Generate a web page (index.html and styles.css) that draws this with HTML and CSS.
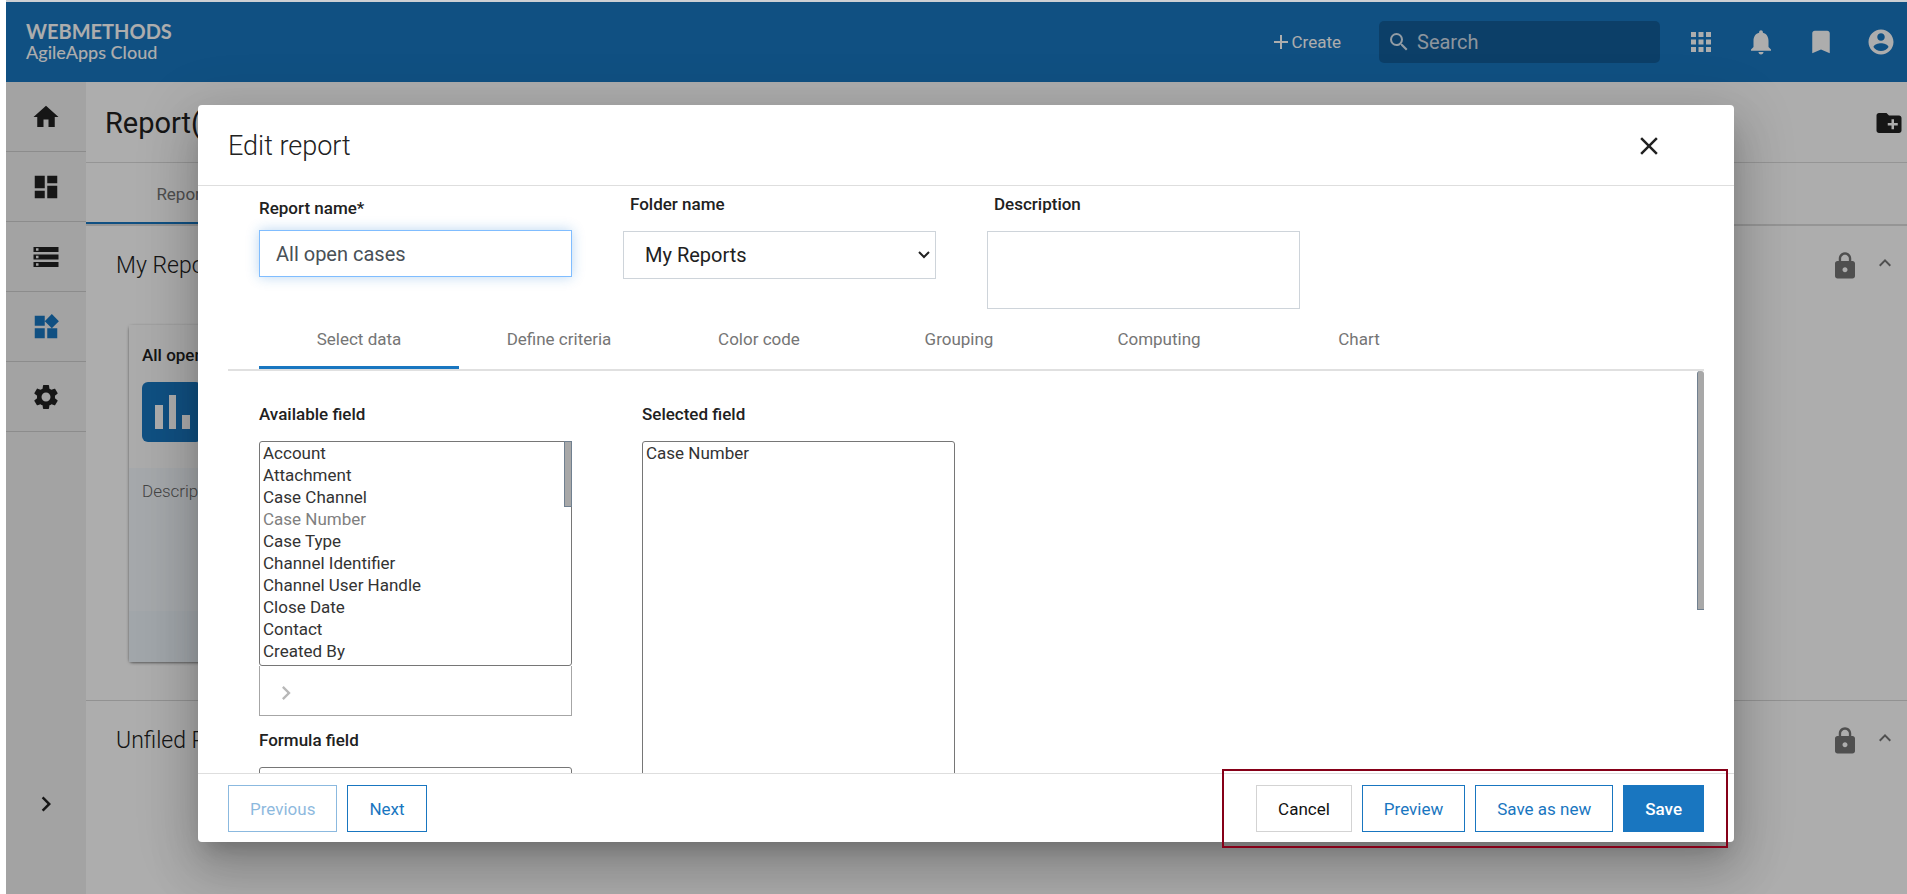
FILE: index.html
```html
<!DOCTYPE html>
<html lang="en">
<head>
<meta charset="utf-8">
<title>AgileApps Cloud - Edit report</title>
<link rel="stylesheet" href="styles.css">
</head>
<body>
<div class="app">
  <header class="topbar">
    <a class="logo" href="#"><span class="logo-name">WEBMETHODS</span><span class="logo-sub">AgileApps Cloud</span></a>
    <div class="topbar-actions">
      <button class="create" type="button">
        <svg width="14" height="14" viewBox="0 0 14 14"><path d="M6 0h2v6h6v2H8v6H6V8H0V6h6z"/></svg>Create
      </button>
      <div class="search">
        <svg class="search-icon" viewBox="0 0 24 24"><path d="M15.5 14h-.79l-.28-.27A6.47 6.47 0 0 0 16 9.5 6.5 6.5 0 1 0 9.5 16c1.61 0 3.09-.59 4.23-1.57l.27.28v.79l5 4.99L20.49 19l-4.99-5zm-6 0C7.01 14 5 11.99 5 9.5S7.01 5 9.5 5 14 7.01 14 9.5 11.99 14 9.5 14z"/></svg>
        <input class="search-input" type="text" placeholder="Search" aria-label="Search">
      </div>
      <button class="icon-btn" type="button" aria-label="Apps"><svg class="icon" viewBox="0 0 24 24"><path d="M4 8h4V4H4v4zm6 12h4v-4h-4v4zm-6 0h4v-4H4v4zm0-6h4v-4H4v4zm6 0h4v-4h-4v4zm6-10v4h4V4h-4zm-6 4h4V4h-4v4zm6 6h4v-4h-4v4zm0 6h4v-4h-4v4z"/></svg></button>
      <button class="icon-btn" type="button" aria-label="Notifications"><svg class="icon" viewBox="0 0 24 24"><path d="M12 22c1.1 0 2-.9 2-2h-4c0 1.1.89 2 2 2zm6-6v-5c0-3.07-1.64-5.64-4.5-6.32V4c0-.83-.67-1.5-1.5-1.5s-1.5.67-1.5 1.5v.68C7.63 5.36 6 7.92 6 11v5l-2 2v1h16v-1l-2-2z"/></svg></button>
      <button class="icon-btn" type="button" aria-label="Bookmarks"><svg class="icon" viewBox="0 0 24 24"><path d="M17 3H7c-1.1 0-1.99.9-1.99 2L5 21l7-3 7 3V5c0-1.1-.9-2-2-2z"/></svg></button>
      <button class="icon-btn" type="button" aria-label="Account"><svg class="icon" viewBox="0 0 24 24"><path d="M12 2C6.48 2 2 6.48 2 12s4.48 10 10 10 10-4.48 10-10S17.52 2 12 2zm0 3c1.66 0 3 1.34 3 3s-1.34 3-3 3-3-1.34-3-3 1.34-3 3-3zm0 14.2c-2.5 0-4.71-1.28-6-3.22.03-1.99 4-3.08 6-3.08 1.99 0 5.97 1.09 6 3.08-1.29 1.94-3.5 3.22-6 3.22z"/></svg></button>
    </div>
  </header>

  <div class="workspace">
    <nav class="sidebar" aria-label="Main">
      <a class="nav-item" href="#" aria-label="Home"><svg class="icon" viewBox="0 0 24 24"><path d="M10 20v-6h4v6h5v-8h3L12 3 2 12h3v8z"/></svg></a>
      <a class="nav-item" href="#" aria-label="Dashboard"><svg class="icon" viewBox="0 0 24 24"><path d="M3 13h8V3H3v10zm0 8h8v-6H3v6zm10 0h8V11h-8v10zm0-18v6h8V3h-8z"/></svg></a>
      <a class="nav-item" href="#" aria-label="Records"><svg class="icon" viewBox="0 0 24 24"><path d="M2 20h20v-4H2v4zm2-3h2v2H4v-2zM2 4v4h20V4H2zm4 3H4V5h2v2zm-4 7h20v-4H2v4zm2-3h2v2H4v-2z"/></svg></a>
      <a class="nav-item nav-item-active" href="#" aria-label="Reports"><svg class="icon" viewBox="0 0 24 24"><path d="M13 13v8h8v-8h-8zM3 21h8v-8H3v8zM3 3v8h8V3H3zm13.660-1.310L11 7.340 16.660 13l5.660-5.660-5.660-5.650z"/></svg></a>
      <a class="nav-item" href="#" aria-label="Settings"><svg class="icon" viewBox="0 0 24 24"><path d="M19.140 12.940c.04-.3.060-.610.060-.940 0-.320-.020-.640-.070-.940l2.030-1.580c.180-.140.230-.410.120-.610l-1.920-3.320c-.120-.220-.370-.290-.590-.220l-2.390.960c-.5-.380-1.030-.7-1.620-.940l-.360-2.540c-.040-.240-.240-.410-.480-.410h-3.840c-.240 0-.430.170-.470.410l-.360 2.540c-.590.240-1.130.570-1.620.940l-2.390-.960c-.220-.080-.470 0-.590.220L2.740 8.870c-.120.210-.080.470.120.610l2.030 1.580c-.05.3-.09.630-.09.940s.020.640.070.940l-2.030 1.580c-.180.140-.230.410-.120.610l1.920 3.320c.120.220.370.290.590.220l2.390-.960c.5.380 1.030.7 1.620.940l.360 2.540c.05.240.240.410.480.410h3.840c.240 0 .440-.170.470-.410l.360-2.540c.590-.240 1.130-.560 1.620-.940l2.390.960c.220.080.470 0 .590-.220l1.920-3.320c.120-.220.070-.470-.120-.610l-2.010-1.580zM12 15.600c-1.980 0-3.600-1.620-3.600-3.600s1.620-3.600 3.600-3.600 3.600 1.620 3.600 3.600-1.620 3.600-3.600 3.600z"/></svg></a>
      <button class="nav-expand" type="button" aria-label="Expand menu"><svg class="icon" viewBox="0 0 24 24"><path d="M10 6L8.590 7.410 13.170 12l-4.580 4.590L10 18l6-6z"/></svg></button>
    </nav>

    <main class="content">
      <div class="page-head">
        <h1 class="page-title">Report(s)</h1>
        <button class="icon-btn icon-dark" type="button" aria-label="New folder"><svg class="icon" viewBox="0 0 24 24"><path d="M20 6h-8l-2-2H4c-1.110 0-1.990.890-1.990 2L2 18c0 1.110.890 2 2 2h16c1.110 0 2-.890 2-2V8c0-1.110-.890-2-2-2zm-1 8h-3v3h-2v-3h-3v-2h3V9h2v3h3v2z"/></svg></button>
      </div>
      <div class="page-tabs"><a class="page-tab" href="#">Reports</a></div>

      <section class="folder">
        <div class="folder-head">
          <h2 class="folder-title">My Reports</h2>
          <div class="folder-tools">
            <svg class="icon" viewBox="0 0 24 24"><path d="M18 8h-1V6c0-2.760-2.240-5-5-5S7 3.240 7 6v2H6c-1.100 0-2 .9-2 2v10c0 1.100.9 2 2 2h12c1.100 0 2-.9 2-2V10c0-1.100-.9-2-2-2zm-6 9c-1.100 0-2-.9-2-2s.9-2 2-2 2 .9 2 2-.9 2-2 2zm3.100-9H8.900V6c0-1.710 1.390-3.100 3.100-3.100s3.100 1.390 3.100 3.100v2z"/></svg>
            <svg class="icon-small" viewBox="0 0 24 24"><path d="M12 8l-6 6 1.410 1.410L12 10.830l4.590 4.580L18 14z"/></svg>
          </div>
        </div>
        <article class="card">
          <div class="card-top">
            <h3 class="card-title">All open cases</h3>
            <svg class="card-icon" viewBox="0 0 60 60"><rect class="card-icon-bg" width="60" height="60" rx="6"/><path class="card-icon-bars" d="M13 23h8v24h-8zM27 13h7v34h-7zM40 33h8v14h-8z"/></svg>
          </div>
          <p class="card-desc">Description</p>
          <div class="card-foot"></div>
        </article>
      </section>

      <section class="folder">
        <div class="folder-head">
          <h2 class="folder-title">Unfiled Reports</h2>
          <div class="folder-tools">
            <svg class="icon" viewBox="0 0 24 24"><path d="M18 8h-1V6c0-2.760-2.240-5-5-5S7 3.240 7 6v2H6c-1.100 0-2 .9-2 2v10c0 1.100.9 2 2 2h12c1.100 0 2-.9 2-2V10c0-1.100-.9-2-2-2zm-6 9c-1.100 0-2-.9-2-2s.9-2 2-2 2 .9 2 2-.9 2-2 2zm3.100-9H8.900V6c0-1.710 1.390-3.100 3.100-3.100s3.100 1.390 3.100 3.100v2z"/></svg>
            <svg class="icon-small" viewBox="0 0 24 24"><path d="M12 8l-6 6 1.410 1.410L12 10.830l4.590 4.580L18 14z"/></svg>
          </div>
        </div>
      </section>
    </main>
  </div>

  <div class="backdrop">
    <div class="dialog" role="dialog" aria-labelledby="dialog-title">
      <div class="dialog-head">
        <h2 class="dialog-title" id="dialog-title">Edit report</h2>
        <button class="icon-btn icon-dark" type="button" aria-label="Close"><svg class="icon" viewBox="0 0 24 24"><path d="M19 6.410L17.590 5 12 10.590 6.410 5 5 6.410 10.590 12 5 17.590 6.410 19 12 13.410 17.590 19 19 17.590 13.410 12z"/></svg></button>
      </div>

      <form class="dialog-form">
        <div class="field field-required">
          <label class="label" for="name">Report name*</label>
          <input class="control control-focus" id="name" type="text" value="All open cases">
        </div>
        <div class="field">
          <label class="label" for="folder">Folder name</label>
          <div class="select-wrap">
            <select class="control control-select" id="folder"><option>My Reports</option></select>
            <svg class="select-arrow" viewBox="0 0 12 8"><path d="M1 1l5 5 5-5"/></svg>
          </div>
        </div>
        <div class="field">
          <label class="label" for="desc">Description</label>
          <textarea class="control control-area" id="desc"></textarea>
        </div>
      </form>

      <div class="steps">
        <button class="step step-active" type="button">Select data</button>
        <button class="step" type="button">Define criteria</button>
        <button class="step" type="button">Color code</button>
        <button class="step" type="button">Grouping</button>
        <button class="step" type="button">Computing</button>
        <button class="step" type="button">Chart</button>
      </div>

      <div class="panel-wrap">
        <div class="panel">
          <div class="panel-col">
            <label class="label" for="available">Available field</label>
            <div class="list-wrap">
              <select class="list" id="available" multiple size="10">
                <option>Account</option>
                <option>Attachment</option>
                <option>Case Channel</option>
                <option disabled>Case Number</option>
                <option>Case Type</option>
                <option>Channel Identifier</option>
                <option>Channel User Handle</option>
                <option>Close Date</option>
                <option>Contact</option>
                <option>Created By</option>
              </select>
              <span class="thumb thumb-list"></span>
            </div>
            <div class="move-box">
              <button class="move" type="button" aria-label="Add field"><svg class="icon-small" viewBox="0 0 24 24"><path d="M10 6L8.590 7.410 13.170 12l-4.580 4.590L10 18l6-6z"/></svg></button>
            </div>
            <label class="label" for="formula">Formula field</label>
            <select class="list" id="formula" multiple size="10"></select>
          </div>
          <div class="panel-col">
            <label class="label" for="selected">Selected field</label>
            <select class="list list-tall" id="selected" multiple size="24">
              <option>Case Number</option>
            </select>
          </div>
        </div>
        <span class="thumb thumb-panel"></span>
      </div>

      <div class="dialog-foot">
        <button class="btn btn-outline" type="button" disabled>Previous</button>
        <button class="btn btn-outline" type="button">Next</button>
        <div class="foot-right">
          <button class="btn" type="button">Cancel</button>
          <button class="btn btn-outline" type="button">Preview</button>
          <button class="btn btn-outline" type="button">Save as new</button>
          <button class="btn btn-primary" type="button">Save</button>
          <span class="highlight"></span>
        </div>
      </div>
    </div>
  </div>
</div>
</body>
</html>
```

FILE: styles.css
```css
* { box-sizing: border-box; }
html, body { height: 100%; }
body {
  margin: 0;
  padding-left: 6px;
  overflow: hidden;
  background: #fff;
  color: #212121;
  font: 17px/24px Roboto, sans-serif;
}
h1, h2, h3, p { margin: 0; }
button, input, select, textarea { font: inherit; color: inherit; }
button { margin: 0; padding: 0; border: 0; background: none; }
a { color: inherit; text-decoration: none; }
svg { display: block; fill: currentColor; }
.icon { width: 30px; height: 30px; }
.icon-small { width: 28px; height: 28px; }

.app {
  position: relative;
  display: flex;
  flex-direction: column;
  height: 100%;
  border-top: 2px solid #cdd0d4;
}

/* Top bar */
.topbar {
  display: flex;
  justify-content: space-between;
  align-items: center;
  height: 80px;
  flex: none;
  padding: 0 11px 0 20px;
  background: #1976c0;
  color: #fff;
}
.logo { display: flex; flex-direction: column; font-family: Lato, sans-serif; }
.logo-name { font-size: 20px; line-height: 20px; font-weight: 700; }
.logo-sub { font-size: 18px; line-height: 22px; font-weight: 500; }
.topbar-actions { display: flex; align-items: center; gap: 30px; }
.create { display: flex; align-items: center; gap: 3px; margin-right: 8px; }
.search {
  display: flex;
  align-items: center;
  gap: 6px;
  width: 281px;
  height: 42px;
  margin-right: -4px;
  padding: 0 8px;
  border-radius: 5px;
  background: #125e9a;
  color: #d8e6f2;
}
.search-icon { width: 24px; height: 24px; flex: none; }
.search-input { flex: 1; min-width: 0; padding: 0; border: 0; background: none; font-size: 20px; }
.search-input::placeholder { color: #d0dce8; opacity: 1; }
.icon-btn { display: flex; }
.icon-dark { color: #212121; }

/* Sidebar */
.workspace { display: flex; flex: 1; min-height: 0; }
.sidebar {
  display: flex;
  flex-direction: column;
  flex: none;
  width: 80px;
  background: #f0f0f0;
}
.nav-item {
  display: flex;
  align-items: center;
  justify-content: center;
  height: 70px;
  border-bottom: 1px solid #cfcfcf;
}
.nav-item-active { color: #1976c0; }
.nav-expand { display: flex; margin: auto auto 75px; }

/* Page behind the dialog */
.content { flex: 1; min-width: 0; }
.page-head {
  display: flex;
  align-items: center;
  justify-content: space-between;
  height: 81px;
  padding: 1px 3px 0 19px;
  border-bottom: 1px solid #dcdcdc;
}
.page-title { font-size: 29px; line-height: 36px; font-weight: 400; }
.page-tabs { display: flex; height: 63px; border-bottom: 2px solid #dcdcdc; }
.page-tab {
  width: 200px;
  padding-top: 19px;
  border-bottom: 2px solid #1976c0;
  text-align: center;
  color: #757575;
}
.folder { border-bottom: 1px solid #d8d8d8; padding-bottom: 38px; }
.folder:last-child { border-bottom: 0; }
.folder-head {
  display: flex;
  justify-content: space-between;
  padding: 24px 8px 0 30px;
}
.folder-title { font-size: 23px; line-height: 32px; font-weight: 300; }
.folder-tools { display: flex; gap: 11px; padding-top: 1px; color: #757575; }
.folder-tools .icon-small { width: 28px; height: 24px; }
.card {
  display: flex;
  flex-direction: column;
  width: 340px;
  height: 337px;
  margin: 43px 0 0 43px;
  border-radius: 4px;
  background: #f4f8fc;
  box-shadow: 0 1px 3px rgba(0, 0, 0, .5);
}
.card-top { height: 143px; padding: 18px 13px; background: #fdfdfd; }
.card-title { font-size: 17px; line-height: 24px; font-weight: 500; }
.card-icon { width: 60px; height: 60px; margin-top: 15px; }
.card-icon-bg { fill: #1976c0; }
.card-icon-bars { fill: #fff; }
.card-desc { flex: 1; padding: 11px 13px; font-weight: 300; color: #666; }
.card-foot { height: 51px; background: #edf5fb; }

/* Dialog */
.backdrop {
  position: absolute;
  inset: 0;
  display: flex;
  padding: 103px 173px 52px 192px;
  background: rgba(0, 0, 0, .32);
}
.dialog {
  display: flex;
  flex-direction: column;
  flex: 1;
  min-width: 0;
  border-radius: 4px;
  background: #fff;
  box-shadow: 0 14px 19px -9px rgba(0, 0, 0, .2), 0 30px 48px 4px rgba(0, 0, 0, .14), 0 11px 58px 10px rgba(0, 0, 0, .12);
}
.dialog-head {
  display: flex;
  align-items: center;
  justify-content: space-between;
  flex: none;
  height: 81px;
  padding: 1px 70px 0 30px;
  border-bottom: 1px solid #dedede;
}
.dialog-title { font-size: 27px; line-height: 36px; font-weight: 300; }
.dialog-form {
  display: grid;
  grid-template-columns: repeat(3, 313px);
  gap: 51px;
  padding: 6px 61px 0;
}
.field { display: flex; flex-direction: column; align-items: stretch; }
.label { display: block; margin-bottom: 15px; font-weight: 500; line-height: 24px; }
.field .label { padding-left: 7px; }
.field-required .label { margin: 4px 0 10px; padding-left: 0; }
.control {
  height: 48px;
  padding: 0 16px;
  border: 1px solid #ced4da;
  border-radius: 0;
  background: #fff;
  font-size: 20px;
  outline: 0;
}
.control-focus {
  height: 47px;
  border-color: #80bdff;
  box-shadow: 0 0 12px rgba(25, 118, 210, .3);
  color: #495057;
}
.select-wrap { position: relative; }
.control-select { display: block; width: 100%; padding: 0 30px 0 21px; appearance: none; }
.select-arrow {
  position: absolute;
  top: 20px;
  right: 6px;
  width: 12px;
  height: 8px;
  fill: none;
  stroke: currentColor;
  stroke-width: 2;
  pointer-events: none;
}
.control-area { height: 78px; resize: none; }

.steps {
  display: flex;
  flex: none;
  height: 62px;
  margin: 0 30px;
  padding-left: 31px;
  border-bottom: 2px solid #e0e0e0;
}
.step {
  width: 200px;
  padding-top: 2px;
  border-bottom: 3px solid transparent;
  color: #757575;
}
.step-active { border-bottom-color: #1976c0; }

.panel-wrap { position: relative; display: flex; flex: 1; min-height: 0; margin: 0 30px; }
.panel {
  display: flex;
  flex: 1;
  align-items: flex-start;
  gap: 70px;
  padding: 31px 31px 0;
  overflow: hidden;
}
.panel-col { width: 313px; }
.list-wrap { position: relative; }
.list {
  display: block;
  width: 100%;
  height: 225px;
  padding: 1px 0 0;
  border: 1px solid #767676;
  border-radius: 3px;
  background: #fff;
  color: #333;
  overflow: hidden;
  outline: 0;
}
.list option { min-height: 22px; padding: 0 3px 2px; }
.list-tall { height: 552px; }
.thumb {
  position: absolute;
  top: 0;
  right: 0;
  width: 8px;
  border: 1px solid #708090;
  background: #a8a8a8;
}
.thumb-list { height: 66px; }
.thumb-panel { width: 7px; height: 239px; border-width: 0 0 1px 1px; border-radius: 3px 3px 0 0; }
.move-box {
  display: flex;
  align-items: center;
  height: 50px;
  margin-bottom: 12px;
  padding: 4px 12px 0;
  border: 1px solid #a6a6a6;
  border-top: 0;
}
.move { color: #b8b8b8; }

.dialog-foot {
  display: flex;
  flex: none;
  gap: 10px;
  padding: 11px 30px 10px;
  border-top: 1px solid #dedede;
}
.foot-right { position: relative; display: flex; gap: 10px; margin-left: auto; }
.btn {
  height: 47px;
  padding: 0 21px;
  border: 1px solid #d3d3d3;
  background: #fff;
  color: #111;
}
.btn-outline { border-color: #1976c0; color: #1976c0; }
.btn:disabled { opacity: .5; }
.btn-primary { border-color: #1976c0; background: #1976c0; color: #fff; font-weight: 500; }

/* Callout frame round the closing actions */
.highlight {
  position: absolute;
  inset: -16px -24px -16px -34px;
  border: 2px solid #860018;
  pointer-events: none;
}
```
